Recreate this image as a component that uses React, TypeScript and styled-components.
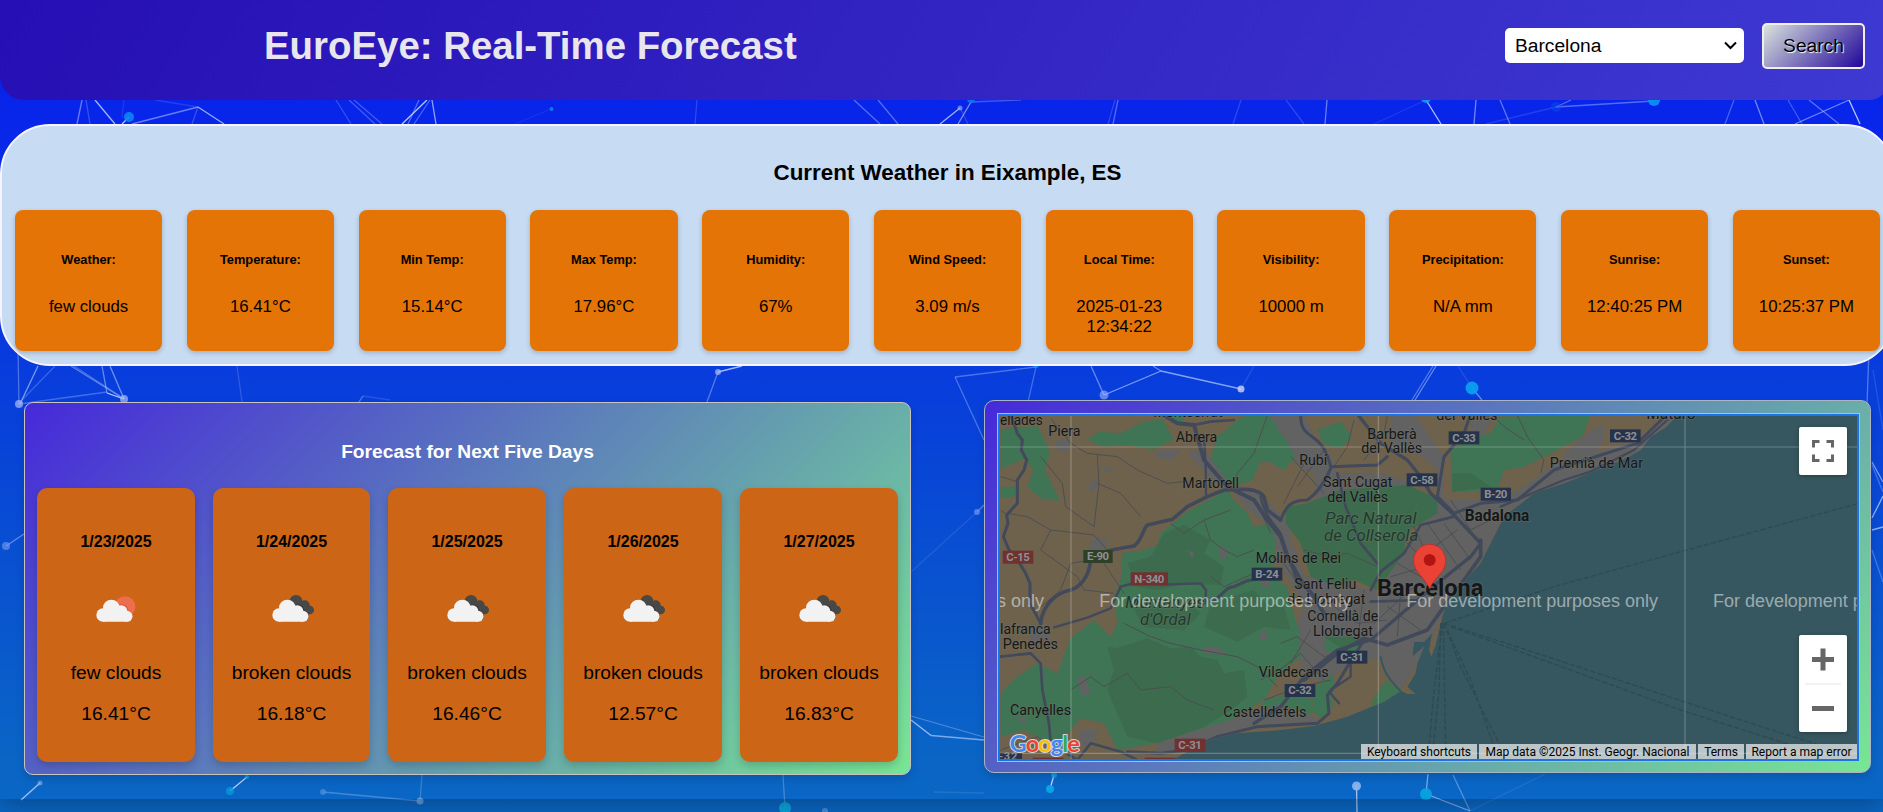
import React from "react";
import styled, { createGlobalStyle } from "styled-components";

const GlobalStyle = createGlobalStyle`
  * { box-sizing: border-box; }
  html, body, #root { height: 100%; }
  body {
    margin: 0;
    overflow: hidden;
    background: linear-gradient(#0820ec 0, #0825ea 110px, #083fdb 400px, #0a65c5 760px, #0a67c4 100%);
    font-family: Arial, "Liberation Sans", sans-serif;
    color: #000;
  }
  h1, h2, h3, h4, h5, p { margin: 0; }
`;

const Page = styled.div`
  position: relative;
  width: 1883px;
  height: 799px;
  box-shadow: 0 8px 20px rgba(0, 0, 0, 0.25);
`;

const Network = styled.svg`
  position: absolute;
  top: 0;
  left: 0;
  z-index: -1;
`;

const Header = styled.header`
  display: flex;
  align-items: center;
  width: 1889px;
  height: 100px;
  padding: 0 24px 8px 264px;
  background: linear-gradient(120deg, #260fb4, #3e39d2);
  border-radius: 0 0 20px 24px;
`;

const Brand = styled.h1`
  flex: 1;
  font-size: 38.4px;
  line-height: 44px;
  color: #e8e6ec;
`;

const CitySelect = styled.div`
  display: flex;
  align-items: center;
  justify-content: space-between;
  width: 239px;
  height: 35px;
  padding: 0 7px 0 10px;
  margin: 0 18px 1px 0;
  border-radius: 5px;
  background: #fff;
  font-size: 19.2px;
`;

const SearchButton = styled.button`
  width: 103px;
  height: 46px;
  padding: 0;
  border: 2px solid #f1efea;
  border-radius: 5px;
  background: linear-gradient(135deg, #dae3dc, #20069a);
  font: 19.2px Arial, "Liberation Sans", sans-serif;
  text-shadow: 1px 1px 1px #fff;
`;

const CurrentPanel = styled.section`
  width: 1895px;
  height: 242px;
  margin-top: 24px;
  padding: 34px 13px 0 13px;
  border: 2px solid #f6f4fe;
  border-radius: 50px;
  background: #c7dbf2;
`;

const CurrentTitle = styled.h2`
  margin-bottom: 24px;
  text-align: center;
  font-size: 22.4px;
  line-height: 26px;
`;

const MetricGrid = styled.div`
  display: grid;
  grid-template-columns: repeat(11, 147.2px);
  column-gap: 24.6px;
`;

const MetricCard = styled.article`
  height: 141px;
  padding: 42px 16px 0;
  border-radius: 8px;
  background: #e37405;
  box-shadow: 0 2px 5px rgba(0, 0, 0, 0.2);
  text-align: center;

  h5 {
    margin: 0 -10px 30px;
    font-size: 12.8px;
    line-height: 15px;
  }
  p {
    margin: 0 -5px;
    padding: 0 10px;
    font-size: 16.8px;
    line-height: 20px;
  }
`;

const Columns = styled.div`
  display: flex;
  align-items: flex-start;
  padding: 34px 0 0 24px;
`;

const ForecastPanel = styled.section`
  width: 887px;
  height: 373px;
  margin-top: 2px;
  padding: 38px 12px 12px;
  border: 1px solid #c9c4bd;
  border-radius: 9px;
  background: linear-gradient(135deg, #4629da, #78e694);
  box-shadow: 0 4px 8px rgba(0, 0, 0, 0.15);
`;

const ForecastTitle = styled.h3`
  margin-bottom: 25px;
  color: #fff;
  text-align: center;
  font-size: 19.2px;
  line-height: 22px;
`;

const DayRow = styled.div`
  display: grid;
  grid-template-columns: 158px 157px 158px 158px 158px;
  justify-content: space-between;
`;

const DayCard = styled.article`
  display: flex;
  flex-direction: column;
  align-items: center;
  height: 274px;
  padding-top: 45px;
  border-radius: 10px;
  background: #cc6516;
  box-shadow: 0 4px 8px rgba(0, 0, 0, 0.18);

  h4 { font-size: 16px; line-height: 18px; }
  svg { margin: 31px 0 30px; }
  p { font-size: 19.2px; line-height: 22px; }
  p + p { margin-top: 19px; }
`;

const MapPanel = styled.section`
  width: 887px;
  height: 373px;
  margin-left: 73px;
  padding: 12px;
  border: 1px solid #a9b5c2;
  border-radius: 10px;
  background: linear-gradient(135deg, #4629da, #78e694);
  box-shadow: 0 4px 8px rgba(0, 0, 0, 0.15);
`;

const MapBox = styled.div`
  position: relative;
  width: 863px;
  height: 349px;
  border: 1px solid #b9bdc4;
  overflow: hidden;

  &::after {
    content: "";
    position: absolute;
    inset: 0;
    border: 2px solid #1a73e8;
    pointer-events: none;
  }
  & > svg { display: block; }
`;

const MapControl = styled.div<{ $top: number; $height: number }>`
  position: absolute;
  top: ${(p) => p.$top}px;
  right: 12px;
  width: 48px;
  height: ${(p) => p.$height}px;
  border-radius: 2px;
  background: #fff;
  box-shadow: 0 1px 4px rgba(0, 0, 0, 0.3);
`;

const Attribution = styled.div`
  position: absolute;
  right: 2px;
  bottom: 1px;
  display: flex;
  gap: 2px;
  height: 16px;
  font: 12px/17px Roboto, Arial, sans-serif;
  white-space: nowrap;
`;

const Credit = styled.span<{ $width: number }>`
  width: ${(p) => p.$width}px;
  background: rgba(245, 245, 245, 0.7);
  text-align: center;
`;

const links: number[][] = [
  [82,100,77,124,.5],[86,100,90,124,.25],[95,100,115,124,.8],[198,107,132,124,.5],[198,107,224,124,.75],[198,107,155,100,.15],[198,107,192,124,.25],[129,117,122,124,.9],[124,100,122,118,.12],
  [336,100,351,124,.25],[349,100,375,124,.3],[354,100,382,124,.3],[427,100,402,124,.9],[419,100,408,124,.4],[430,100,414,124,.35],[432,100,436,124,.7],[551,109,515,124,.08],[697,100,695,124,.2],[854,100,880,124,.4],[878,100,898,124,.4],
  [971,102,958,124,.6],[960,108,940,124,.8],[960,108,968,124,.2],[971,102,1021,100,.3],[1118,100,1113,124,.4],[1115,100,1108,124,.2],[1241,100,1233,124,.2],[1286,100,1304,124,.2],[1327,100,1325,124,.5],[1426,100,1374,124,.12],[1426,100,1441,124,.9],[1476,100,1474,124,.55],[1500,100,1510,124,.45],
  [1556,107,1654,101,.4],[1556,107,1486,124,.15],[1556,107,1571,100,.4],[1734,100,1725,124,.35],[1755,100,1764,124,.55],[1788,100,1802,124,.3],[1849,100,1795,124,.55],[1809,100,1839,124,.45],[1849,100,1860,124,.9],
  [18,350,19,404,.35],[38,366,20,404,.6],[55,366,22,400,.25],[71,366,124,399,.45],[74,366,120,396,.3],[102,366,107,393,.5],[110,366,124,399,.55],[107,393,124,399,.95],[19,404,107,392,.3],[237,366,242,402,.2],[363,396,359,402,.4],[363,396,390,400,.15],
  [718,372,742,366,.8],[718,372,707,402,.4],[955,377,1036,367,.35],[955,377,984,440,.35],[1036,367,1028,402,.3],[1091,366,1104,395,.5],[1104,395,1161,371,.6],[1161,371,1241,389,.65],[1161,371,1153,366,.5],[1254,366,1241,389,.15],[1436,366,1415,400,.5],[1433,366,1412,400,.4],[1472,388,1482,400,.5],[1458,366,1472,388,.15],[1869,350,1867,404,.4],[1873,370,1883,430,.15],
  [6,546,24,534,.45],[21,800,40,783,.8],[230,791,247,777,.9],[323,792,420,801,.3],[420,801,422,775,.25],[785,808,783,775,.3],[934,792,984,793,.12],[911,720,931,735.5,.75],[931,735.5,984,740,.6],[911,716,984,737,.35],[977,512,984,505,.4],[977,512,911,572,.12],
  [1050,789,1054,775,.95],[1356.5,786,1357,812,.8],[1426,794,1428,774,.6],[1426,794,1470,811,.6],[1453,775,1470,811,.4],[1470,811,1545,774,.12],
  [1872,462,1883,482,.6],[1872,465,1883,492,.3],[1883,496,1872,518,.7],[1872,530,1883,527,.7],[1872,550,1883,582,.3],
];

const nodes: [number, number, number, string, number][] = [
  [129,117,5,"#0a86f5",.9],[551.5,109,2,"#0a8ff0",.8],[971,99,4,"#0a80f0",.8],[960,108,2.5,"#9fb4ff",.6],[1426,98,5,"#0a9af5",.9],[1654,100,6,"#0a8ff5",.95],[1556,107,5,"#0a50f0",.45],
  [19,404,4,"#aebcf5",.7],[124,399,4,"#aebcf5",.7],[718,372,3,"#aebcf5",.7],[1036,365,3,"#0a9af0",.8],[1104,395,4.5,"#9fb4ff",.6],[1241,389,3.5,"#c3cff8",.85],[1472,388,6.5,"#0a9ff0",.95],
  [6,546,4,"#7aa0ee",.6],[40,783,2.5,"#8fb5ee",.6],[230,791,4,"#0a96da",.8],[247,777,2,"#0ab0e0",.8],[323,792,3,"#4f8fe0",.7],[420,801,3.5,"#6fa4e0",.8],[785,808,6,"#0aa8de",.95],[825,811,3,"#6fa4e0",.6],[977,512,3,"#6f97ee",.7],
  [1050,789,4,"#0ba5e4",.95],[1054,775,3,"#0ba5e4",.8],[1356.5,786,4.5,"#8fb8ee",.9],[1426,794,6,"#0aa2e0",.95],
];

const roads: [string, number][] = [
  ["M120 72L140 130 155 150 152 180 168 210 160 240 140 270 140 340 108 375 112 400 98 440 115 480 135 500 165 550 178 580 178 640 210 700", 9],
  ["M210 700C215 650 250 610 300 600C330 590 355 560 360 510C400 480 430 478 490 468C515 450 515 420 530 405L605 388 650 350 710 320 760 300C800 298 860 290 880 320L890 360 930 390", 11],
  ["M250 712L350 683 420 655 450 590 480 582 600 583 690 580 706 600 704 640", 7],
  ["M720 635C760 620 760 590 790 590L830 572 930 552", 9],
  ["M580 75L620 100 670 105 700 210 770 290 850 330 890 390 930 440 950 500 990 570 1030 620 1060 670", 12],
  ["M670 105L720 95 790 90", 8],["M700 140L705 230 706 320", 7],
  ["M870 320C880 370 900 390 930 430L960 520 985 590", 7],
  ["M990 75C990 160 1050 110 1080 230L1220 225 1250 200M1080 235C1060 280 1040 310 1010 330C960 330 945 350 930 390", 9],
  ["M1160 72L1190 110 1230 160 1310 210 1350 260 1380 310 1450 375 1530 460 1500 500 1400 580 1200 750 1100 780 1000 860 930 950 850 1000", 10],
  ["M1500 72L1480 130 1420 200 1400 320 1450 370 1530 340 1640 330 1750 240 2000 160 2090 72", 9],
  ["M1590 350L1780 270 1860 245 1990 180 2090 90", 7],
  ["M1450 380L1350 405 1300 490 1230 545 1200 600M1200 635L1350 630", 8],
  ["M1100 250L1125 350 1170 460 1220 520", 8],
  ["M1530 450L1530 500 1480 570 1420 650 1370 720 1250 765 1180 745 1100 790 1000 870", 11],
  ["M1180 750L1130 830 1100 880 1070 915 1075 970 1040 1000 860 1010 740 1040 650 1080 570 1090 470 1085", 9],
  ["M1140 820L1140 860 1080 900M1075 905L1105 940", 7],
  ["M90 800L180 790 210 820 215 900 235 1000 240 1060M240 1060L320 1110 360 1060 450 1085 500 1110", 8],
];

const lanes = [
  "M240 85L300 160 350 190 440 200 500 240 590 280 640 275","M380 195L385 280 370 410","M210 200L275 280 285 350 370 410","M110 370L170 380 240 420 370 435 410 480","M380 280L450 310 510 380",
  "M90 260L140 275 M90 360L110 375","M240 420L210 480 320 560 340 600 430 610","M360 510L300 520 270 600 200 660","M410 480L400 520 460 610","M300 900L360 860 400 890 470 850 510 900 600 890 650 930 730 960",
  "M460 700L540 740 600 760 690 780 800 800 860 830 920 890","M600 400L640 430 700 390 720 450 760 480 800 500 850 480","M700 390L780 360","M890 75L850 190 800 250 780 290","M1000 480L1080 500 1130 490 1220 530",
  "M1150 90L1130 170 1090 230","M1250 75L1240 130 1180 210","M1640 75L1670 140 1720 210 1710 250","M1560 72L1600 110 1660 150","M980 580L940 520 900 500","M930 760L980 740 1060 800 1100 790","M720 560L760 590 850 550 920 560","M90 1080L200 1040 260 1090",
  "M1290 440L1350 500 1460 420 M1330 410L1400 560M1370 400L1470 540M1420 400L1500 510M1280 520L1420 600M1260 560L1400 520M1250 650L1350 720M1290 610L1280 740M1210 700L1330 590","M1180 600L1160 760M1050 620L1160 700 1250 690","M960 200L1060 310M1000 220L940 340M1060 180L980 290M860 340L900 430M1580 380L1500 420 1440 330","M870 870L940 830 990 790 1060 870M1020 720L960 820M880 930L990 890 1080 870",
];

const green = [
  "90,118 200,108 232,170 236,195 222,240 268,333 210,325 170,290 188,240 165,205 90,236","90,290 145,290 150,300 120,325 90,322","350,150 385,125 450,130 520,95 575,88 610,150 545,178 470,165 400,170",
  "715,225 740,140 815,80 890,72 920,110 900,180 930,220 870,215 845,270 790,290","580,75 640,80 640,110 600,95","455,490 520,480 560,465 570,430 650,365 770,300 790,330 830,370 850,410 905,400 915,470 905,560 950,590 960,640 985,720 990,800 920,860 880,930 700,1040 560,1060 440,1080 400,1000 330,985 260,1070 160,1020 90,1040 90,910 140,860 200,820 260,850 300,745 370,690 420,740 440,700 430,620 450,570",
  "1040,120 1110,95 1145,140 1110,175 1060,165","890,90 940,140 975,200 940,240 910,225 890,180","1440,180 1500,145 1560,130 1590,80 1860,75 1835,140 1750,185 1660,230 1600,240 1580,300 1445,305","1065,740 1190,740 1140,795 1060,780","1020,900 1090,850 1090,940 1060,990 1030,970","880,930 1010,900 1030,960 980,1000 880,990",
];
const darkGreen = [
  "945,350 1010,340 1110,300 1310,285 1400,325 1400,370 1310,425 1300,490 1220,600 1150,570 1100,590 1020,560 990,460 945,400","580,430 640,405 720,450 700,490 760,530 750,585 640,580 560,600 500,590 470,520 540,500","410,770 440,775 530,745 600,775 660,770 690,800 740,810 760,850 820,840 830,920 780,960 700,1010 560,1060 470,1040 440,970 410,900 430,840","720,640 850,600 880,640 940,650 960,720 880,710 800,755 700,710","480,640 640,630 690,670 640,720 520,710","1060,740 1180,740 1120,780","1445,250 1500,250 1560,290 1445,305",
];
const urban = [
  "890,75 1000,80 1080,190 1100,250 1040,330 1030,250 1000,240 960,210","1080,250 1240,250 1320,280 1240,310 1100,320 1020,350","780,290 840,290 960,400 980,500 1000,560 1050,560 1200,600 1240,520 1300,480 1400,340 1400,240 1340,190 1260,180 1260,72 1330,72 1420,200 1420,330 1600,330 1760,220 2000,150 2100,72 2130,80 2000,200 1700,320 1600,370 1540,500 1420,660 1380,760 1290,900 1210,820 1140,820 1060,880 1000,850 960,750 1000,650 930,520 900,410 830,360",
  "650,185 700,180 770,270 740,290","355,465 375,440 410,455 400,485 370,490","350,285 385,265 365,310","400,235 425,230 410,250","255,150 300,150 290,185 260,180","180,700 240,720 235,750 180,760","320,860 345,860 360,910 335,920","700,770 740,770 765,795 700,790","650,480 670,490 665,505","750,465 770,480 765,510 745,500","560,1060 680,1020 850,970 930,940 1050,990 780,1025 680,1070 560,1090","330,1020 380,1020 370,1060 320,1070","870,570 890,560 900,590 875,595","135,985 165,980 165,1005","865,730 885,720 890,745 870,750","560,180 630,180 600,210 550,200",
  "1500,80 1560,90 1540,140 1510,160 1500,150","1780,190 1850,130 1900,100 1900,150 1860,210 1770,240",
];
const fields = [
  "1000,80 1060,110 1060,165 1120,180 1180,130 1240,150 1240,220 1150,225 1090,200 1040,150","1410,80 1480,80 1470,130 1430,160","960,400 985,405 990,470 960,470","880,200 940,250 1000,240 960,290 940,340 900,330",
];

const places: [string, number, number, number][] = [
  ["ellades",88,106,128],["Piera",233,138,96],["Abrera",615,155,125],["Martorell",635,293,170],["Rubí",986,225,84],["Barberà",1190,146,148],["del Vallès",1172,190,182],["Sant Cugat",1057,291,208],["del Vallès",1070,335,182],
  ["Molins de Rei",855,518,256],["Sant Feliu",971,597,186],["de Llobregat",950,641,234],["Cornellà de",1010,694,213],["Llobregat",1027,738,180],["lafranca",88,732,152],["Penedès",96,776,166],["Canyelles",118,974,183],["Castelldefels",758,981,249],["Viladecans",864,860,210],
  ["Premià de Mar",1737,234,280],["del Vallès",1397,89,183],["Mataró",2027,87,148],["Montserrat",548,80,208],
];

const shields: [string, number, number, number, string][] = [
  ["C-15",96,482,92,"#71312f"],["N-340",480,547,112,"#71312f"],["C-31",612,1046,92,"#71312f"],["E-90",338,480,88,"#2d4028"],["B-24",843,533,92,"#26334b"],["C-31",1098,782,92,"#26334b"],["C-32",942,882,92,"#26334b"],["C-58",1308,250,92,"#26334b"],["C-33",1434,124,92,"#26334b"],["C-32",1918,118,92,"#26334b"],["B-20",1530,293,91,"#26334b"],
];

const coast = "82,72 2125,72 2085,112 2040,140 2010,180 1960,208 1880,240 1780,280 1690,310 1600,380 1565,450 1530,520 1480,575 1430,635 1415,680 1395,765 1382,800 1375,780 1385,730 1360,755 1330,755 1325,800 1360,770 1340,820 1335,850 1310,890 1335,912 1310,912 1290,903 1240,935 1130,980 1030,1008 910,1022 800,1030 730,1045 680,1068 600,1113 82,1113";

function CityMap() {
  return (
    <svg width="861" height="347" viewBox="82 72 2583 1041" fontFamily="Roboto, Arial, sans-serif">
      <rect x="82" y="72" width="2583" height="1041" fill="#36575f" />
      <clipPath id="land"><polygon points={coast} /></clipPath>
      <g clipPath="url(#land)">
        <rect x="82" y="72" width="2100" height="1041" fill="#6e624c" />
        {urban.map((p) => <polygon key={p} points={p} fill="#626262" />)}
        {fields.map((p) => <polygon key={p} points={p} fill="#6e624c" />)}
        {green.map((p) => <polygon key={p} points={p} fill="#3f7454" />)}
        {darkGreen.map((p) => <polygon key={p} points={p} fill="#3c6b4d" />)}
        {urban.slice(3, 19).map((p) => <polygon key={p} points={p} fill="#626262" />)}
        <polygon points="1150,810 1230,805 1245,860 1205,945 1130,980 1080,930 1140,880" fill="#6e624c" />
        <polygon points="1200,945 1245,870 1295,905 1240,940" fill="#3f7454" />
        <g fill="none" stroke="#4d4f52" strokeWidth="3" strokeLinejoin="round">
          {lanes.map((d) => <path key={d} d={d} />)}
        </g>
        <g fill="none" stroke="#41495a" strokeLinejoin="round" strokeLinecap="round">
          {roads.map(([d, w]) => <path key={d} d={d} strokeWidth={w} />)}
        </g>
        <path d="M1230 800C1240 860 1270 880 1300 915" fill="none" stroke="#36575f" strokeWidth="6" />
      </g>
      <g fill="none" stroke="#2f4a50" strokeWidth="4" strokeDasharray="16 6">
        <path d="M1420 700L1750 590 2130 485 2665 340M1420 700L1700 790 2140 935 2560 1070M1440 710L1730 815 2130 960 2460 1065M1420 700L1470 830 1590 1070M1420 700L1500 870 1570 1070M1415 700L1390 900 1375 1070M1410 700L1405 900 1388 1070M1418 700L1425 1070" />
      </g>
      <g stroke="#fff" strokeOpacity=".25" strokeWidth="3.5">
        <path d="M301 72V1113M1223 72V1113M2143 72V1113M82 171H2665M82 1090H2665" />
      </g>
      {shields.map(([label, x, y, w, fill]) => (
        <g key={`${label}${x}`}>
          <rect x={x} y={y} width={w} height="39" fill={fill} />
          <text x={x + 11} y={y + 31} textLength={w - 22} fontSize="34" fontWeight="700" fill="#8d9096">{label}</text>
        </g>
      ))}
      <rect x="82" y="1090" width="72" height="23" fill="#26334b" />
      <text x="84" y="1110" fontSize="33" fontWeight="700" textLength="56" fill="#8d9096">-32</text>
      <rect x="186" y="1103" width="92" height="10" fill="#71312f" />
      <rect x="522" y="1103" width="92" height="10" fill="#71312f" />
      <g fill="#161718" stroke="#74766f" strokeWidth="5" strokeOpacity=".4" paintOrder="stroke" fontSize="46">
        {places.map(([name, x, y, w]) => <text key={`${name}${x}`} x={x} y={y} textLength={w} lengthAdjust="spacingAndGlyphs">{name}</text>)}
        <text x="1482" y="394" fontSize="47" fontWeight="700" textLength="194" lengthAdjust="spacingAndGlyphs">Badalona</text>
        <text x="1219" y="618" fontSize="72" fontWeight="700" textLength="319" lengthAdjust="spacingAndGlyphs">Barcelona</text>
        <g fontStyle="italic" fontSize="52" fill="#203a2c">
          <text x="1063" y="403" textLength="275" lengthAdjust="spacingAndGlyphs">Parc Natural</text>
          <text x="1060" y="454" textLength="283" lengthAdjust="spacingAndGlyphs">de Collserola</text>
          <text x="464" y="654" textLength="238" lengthAdjust="spacingAndGlyphs">Muntanyes</text>
          <text x="508" y="704" textLength="152" lengthAdjust="spacingAndGlyphs">d'Ordal</text>
        </g>
      </g>
      <path d="M1377 463c-27 0-48 22-48 49 0 36 35 50 48 85 13-35 48-49 48-85 0-27-21-49-48-49z" fill="#ea4335" stroke="#c5221f" strokeWidth="2" />
      <circle cx="1377" cy="510" r="18" fill="#b31412" />
      <g fontFamily="Liberation Sans, Arial, sans-serif" fontSize="54" fill="#fff" fillOpacity=".5">
        {[-535, 386, 1307, 2227].map((x) => <text key={x} x={x} y="652" textLength="755">For development purposes only</text>)}
      </g>
      <text x="117" y="1085" fontFamily="Lato, sans-serif" fontWeight="700" fontSize="70" textLength="210" stroke="#d5d8d5" strokeWidth="6" paintOrder="stroke" strokeLinejoin="round">
        <tspan fill="#4285f4">G</tspan><tspan fill="#ea4335">o</tspan><tspan fill="#fbbc04">o</tspan><tspan fill="#4285f4">g</tspan><tspan fill="#34a853">l</tspan><tspan fill="#ea4335">e</tspan>
      </text>
    </svg>
  );
}

function WeatherIcon({ broken }: { broken: boolean }) {
  return (
    <svg width="50" height="50" viewBox="273 575 150 150">
      {broken ? (
        <g fill="#484848">
          <circle cx="360" cy="633" r="19" /><circle cx="386" cy="645" r="15" /><circle cx="401" cy="659" r="13" />
          <path d="M355 640h35l8 32h-30z" />
        </g>
      ) : <circle cx="375" cy="649" r="31" fill="#ec6e4c" />}
      <g fill={broken ? "#3a3a3a" : "#e2553a"}>
        <circle cx="366" cy="661" r="19" /><circle cx="381" cy="677" r="17" />
      </g>
      <g fill="#f2f2f2">
        <circle cx="334" cy="653" r="25" /><circle cx="364" cy="663" r="18" /><circle cx="309" cy="674" r="20" /><circle cx="381" cy="678" r="16.5" />
        <path d="M309 662h60l14 32h-74z" />
      </g>
    </svg>
  );
}

const metrics = [
  ["Weather:", "few clouds"], ["Temperature:", "16.41°C"], ["Min Temp:", "15.14°C"], ["Max Temp:", "17.96°C"], ["Humidity:", "67%"], ["Wind Speed:", "3.09 m/s"],
  ["Local Time:", "2025-01-23 12:34:22"], ["Visibility:", "10000 m"], ["Precipitation:", "N/A mm"], ["Sunrise:", "12:40:25 PM"], ["Sunset:", "10:25:37 PM"],
];

const days = [
  ["1/23/2025", "few clouds", "16.41°C"], ["1/24/2025", "broken clouds", "16.18°C"], ["1/25/2025", "broken clouds", "16.46°C"],
  ["1/26/2025", "broken clouds", "12.57°C"], ["1/27/2025", "broken clouds", "16.83°C"],
];

export default function App() {
  return (
    <>
      <GlobalStyle />
      <Network width="1883" height="812">
        {links.map(([a, b, c, d, o], i) => <line key={i} x1={a} y1={b} x2={c} y2={d} stroke="#c8d8ff" strokeOpacity={o} strokeWidth="1.3" />)}
        {nodes.map(([x, y, r, fill, o], i) => <circle key={i} cx={x} cy={y} r={r} fill={fill} opacity={o} />)}
      </Network>
      <Page>
        <Header>
          <Brand>EuroEye: Real-Time Forecast</Brand>
          <CitySelect>
            Barcelona
            <svg width="13" height="9" viewBox="0 0 13 9"><path d="M1 1.5l5.5 5.5L12 1.5" fill="none" stroke="#000" strokeWidth="2" /></svg>
          </CitySelect>
          <SearchButton>Search</SearchButton>
        </Header>
        <CurrentPanel>
          <CurrentTitle>Current Weather in Eixample, ES</CurrentTitle>
          <MetricGrid>
            {metrics.map(([label, value]) => (
              <MetricCard key={label}><h5>{label}</h5><p>{value}</p></MetricCard>
            ))}
          </MetricGrid>
        </CurrentPanel>
        <Columns>
          <ForecastPanel>
            <ForecastTitle>Forecast for Next Five Days</ForecastTitle>
            <DayRow>
              {days.map(([date, sky, temp]) => (
                <DayCard key={date}>
                  <h4>{date}</h4>
                  <WeatherIcon broken={sky === "broken clouds"} />
                  <p>{sky}</p>
                  <p>{temp}</p>
                </DayCard>
              ))}
            </DayRow>
          </ForecastPanel>
          <MapPanel>
            <MapBox>
              <CityMap />
              <MapControl $top={12.5} $height={48}>
                <svg width="48" height="48"><path d="M14.5 20.5v-6h6M27.500 14.500h6v6M33.500 27.500v6h-6M20.500 33.500h-6v-6" fill="none" stroke="#666" strokeWidth="3" /></svg>
              </MapControl>
              <MapControl $top={221} $height={97}>
                <svg width="48" height="97">
                  <path d="M13 24.500h22M24 13.500v22M13 73.500h22" stroke="#666" strokeWidth="5" />
                  <path d="M6 49h36" stroke="#e6e6e6" />
                </svg>
              </MapControl>
              <Attribution>
                <Credit $width={116}>Keyboard shortcuts</Credit>
                <Credit $width={217}>Map data ©2025 Inst. Geogr. Nacional</Credit>
                <Credit $width={46}>Terms</Credit>
                <Credit $width={111}>Report a map error</Credit>
              </Attribution>
            </MapBox>
          </MapPanel>
        </Columns>
      </Page>
    </>
  );
}
